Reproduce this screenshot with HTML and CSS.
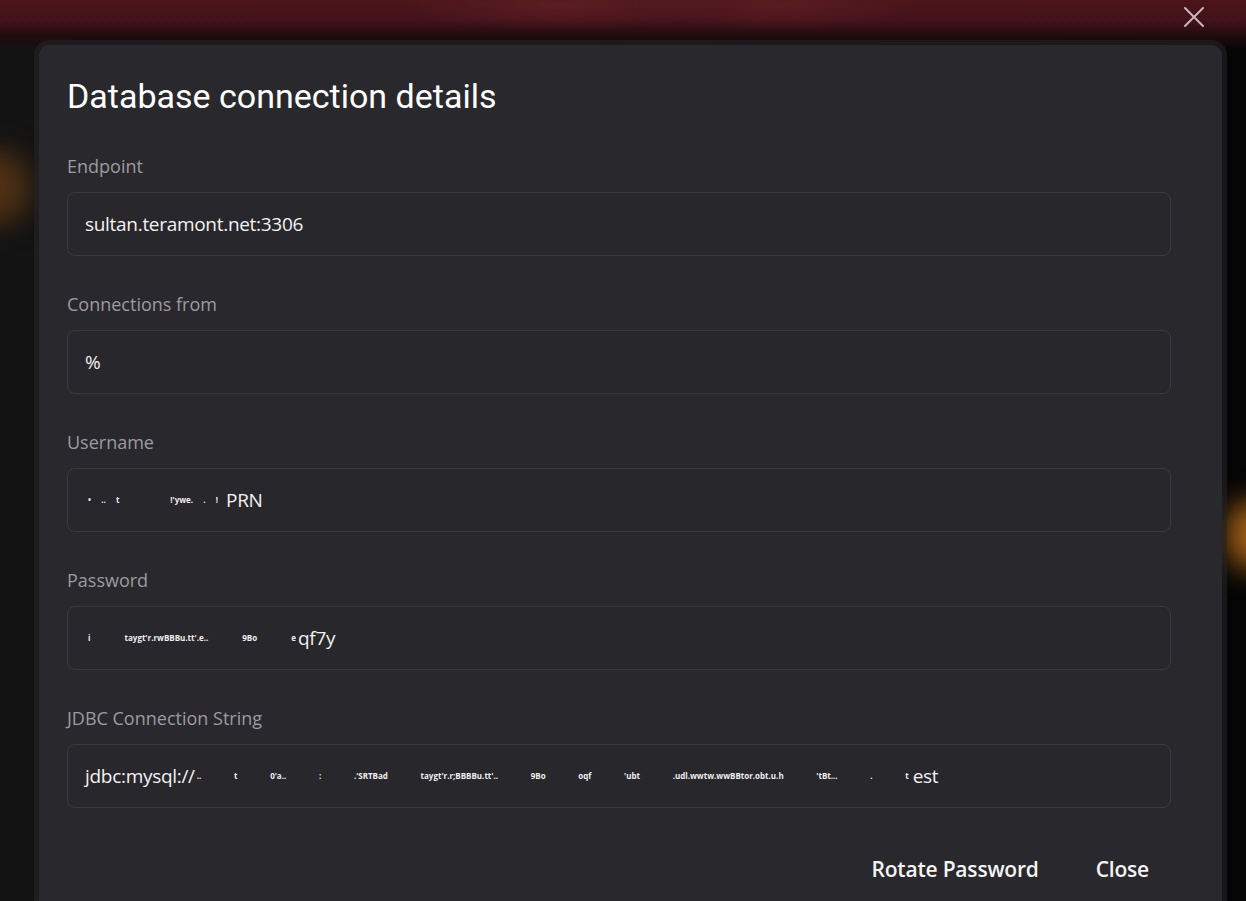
FILE: index.html
```html
<!DOCTYPE html>
<html>
<head>
<meta charset="utf-8">
<link rel="stylesheet" href="styles.css">
</head>
<body>
<div class="backdrop">
  <div class="topband"></div>
  <div class="glow glow-left"></div>
  <div class="glow glow-right"></div>
</div>
<button class="dismiss" aria-label="Close">
  <svg width="22" height="22" viewBox="0 0 22 22"><path d="M2 2L20 20M20 2L2 20" stroke="#c9b6b8" stroke-width="2" stroke-linecap="round"/></svg>
</button>
<div class="modal">
  <h1 class="title">Database connection details</h1>
  <div class="field">
    <label class="label">Endpoint</label>
    <div class="input">sultan.teramont.net:3306</div>
  </div>
  <div class="field">
    <label class="label">Connections from</label>
    <div class="input">%</div>
  </div>
  <div class="field">
    <label class="label">Username</label>
    <div class="input"><span class="blur blur-user">&#8226; .. t &nbsp; &nbsp; !'ywe. . !</span>PRN</div>
  </div>
  <div class="field">
    <label class="label">Password</label>
    <div class="input"><span class="blur blur-pass">i taygt'r.rwBBBu.tt'.e.. 9Bo e</span>qf7y</div>
  </div>
  <div class="field">
    <label class="label">JDBC Connection String</label>
    <div class="input">jdbc:mysql://<span class="blur blur-jdbc">.. t 0'a.. : .'SRTBad taygt'r.r;BBBBu.tt'.. 9Bo oqf 'ubt .udl.wwtw.wwBBtor.obt.u.h 'tBt... . t</span>est</div>
  </div>
  <div class="actions">
    <button class="btn">Rotate Password</button>
    <button class="btn">Close</button>
  </div>
</div>
</body>
</html>
```
FILE: styles.css
```css
* { box-sizing: border-box; }
html, body { margin: 0; padding: 0; }
body {
  width: 1246px;
  height: 901px;
  overflow: hidden;
  background: #0b0b0b;
  font-family: "Open Sans", "Noto Sans", sans-serif;
  position: relative;
}
.backdrop {
  position: absolute;
  inset: 0;
  background: linear-gradient(90deg, #131313 0%, #0e0e0e 50%, #050505 100%);
}
.topband {
  height: 50px;
  background:
    radial-gradient(ellipse 160px 25px at 560px 6px, rgba(110,40,45,0.45), transparent),
    radial-gradient(ellipse 140px 25px at 780px 6px, rgba(110,40,45,0.4), transparent),
    linear-gradient(180deg, #4b1519 0%, #44121a 40%, #1c0b0c 75%, rgba(14,14,14,0) 100%);
}
.glow {
  position: absolute;
  border-radius: 50%;
  filter: blur(14px);
}
.glow-left {
  left: -35px; top: 150px; width: 65px; height: 75px;
  background: rgba(110,65,20,0.65);
}
.glow-right {
  left: 1226px; top: 500px; width: 50px; height: 70px;
  background: rgba(190,110,25,0.85);
}
.dismiss {
  position: absolute;
  left: 1183px; top: 6px;
  width: 22px; height: 22px;
  padding: 0; border: 0; background: none;
}
.modal {
  position: absolute;
  left: 39px; top: 45px;
  width: 1183px;
  height: 880px;
  background: #29282d;
  border-radius: 10px;
  box-shadow: 0 0 0 5px rgba(38,37,42,0.55);
  padding: 31px 51px 0 28px;
}
.title {
  margin: 0 0 38px;
  font-family: Roboto, "Noto Sans", sans-serif;
  font-weight: 400;
  font-size: 34px;
  line-height: 40px;
  color: #ffffff;
}
.field {
  display: flex;
  flex-direction: column;
  gap: 14px;
  margin-bottom: 36px;
}
.label {
  font-size: 18px;
  line-height: 24px;
  color: #9c9ba1;
}
.input {
  height: 64px;
  border: 1px solid #3b3a41;
  border-radius: 8px;
  background: #28272c;
  padding: 0 17px;
  display: flex;
  align-items: center;
  font-size: 19px;
  color: #f2f2f2;
  letter-spacing: -0.3px;
  white-space: nowrap;
}
.blur {
  display: inline-block;
  font-size: 8px;
  font-weight: 700;
  line-height: 10px;
  letter-spacing: 0;
  color: #eeeeee;
  text-align: justify;
  text-align-last: justify;
  white-space: normal;
  overflow: hidden;
  height: 10px;
}
.blur-user { width: 130px; margin: 0 8px 0 3px; }
.blur-pass { width: 208px; margin: 0 2px 0 3px; }
.blur-jdbc { width: 712px; margin: 0 4px 0 2px; }
.actions {
  display: flex;
  justify-content: flex-end;
  gap: 57px;
  padding-right: 22px;
  margin-top: 46px;
}
.btn {
  border: 0;
  background: none;
  padding: 0;
  font-family: "Open Sans", "Noto Sans", sans-serif;
  font-weight: 600;
  font-size: 21px;
  line-height: 30px;
  color: #f4f4f4;
  letter-spacing: -0.2px;
}
```
